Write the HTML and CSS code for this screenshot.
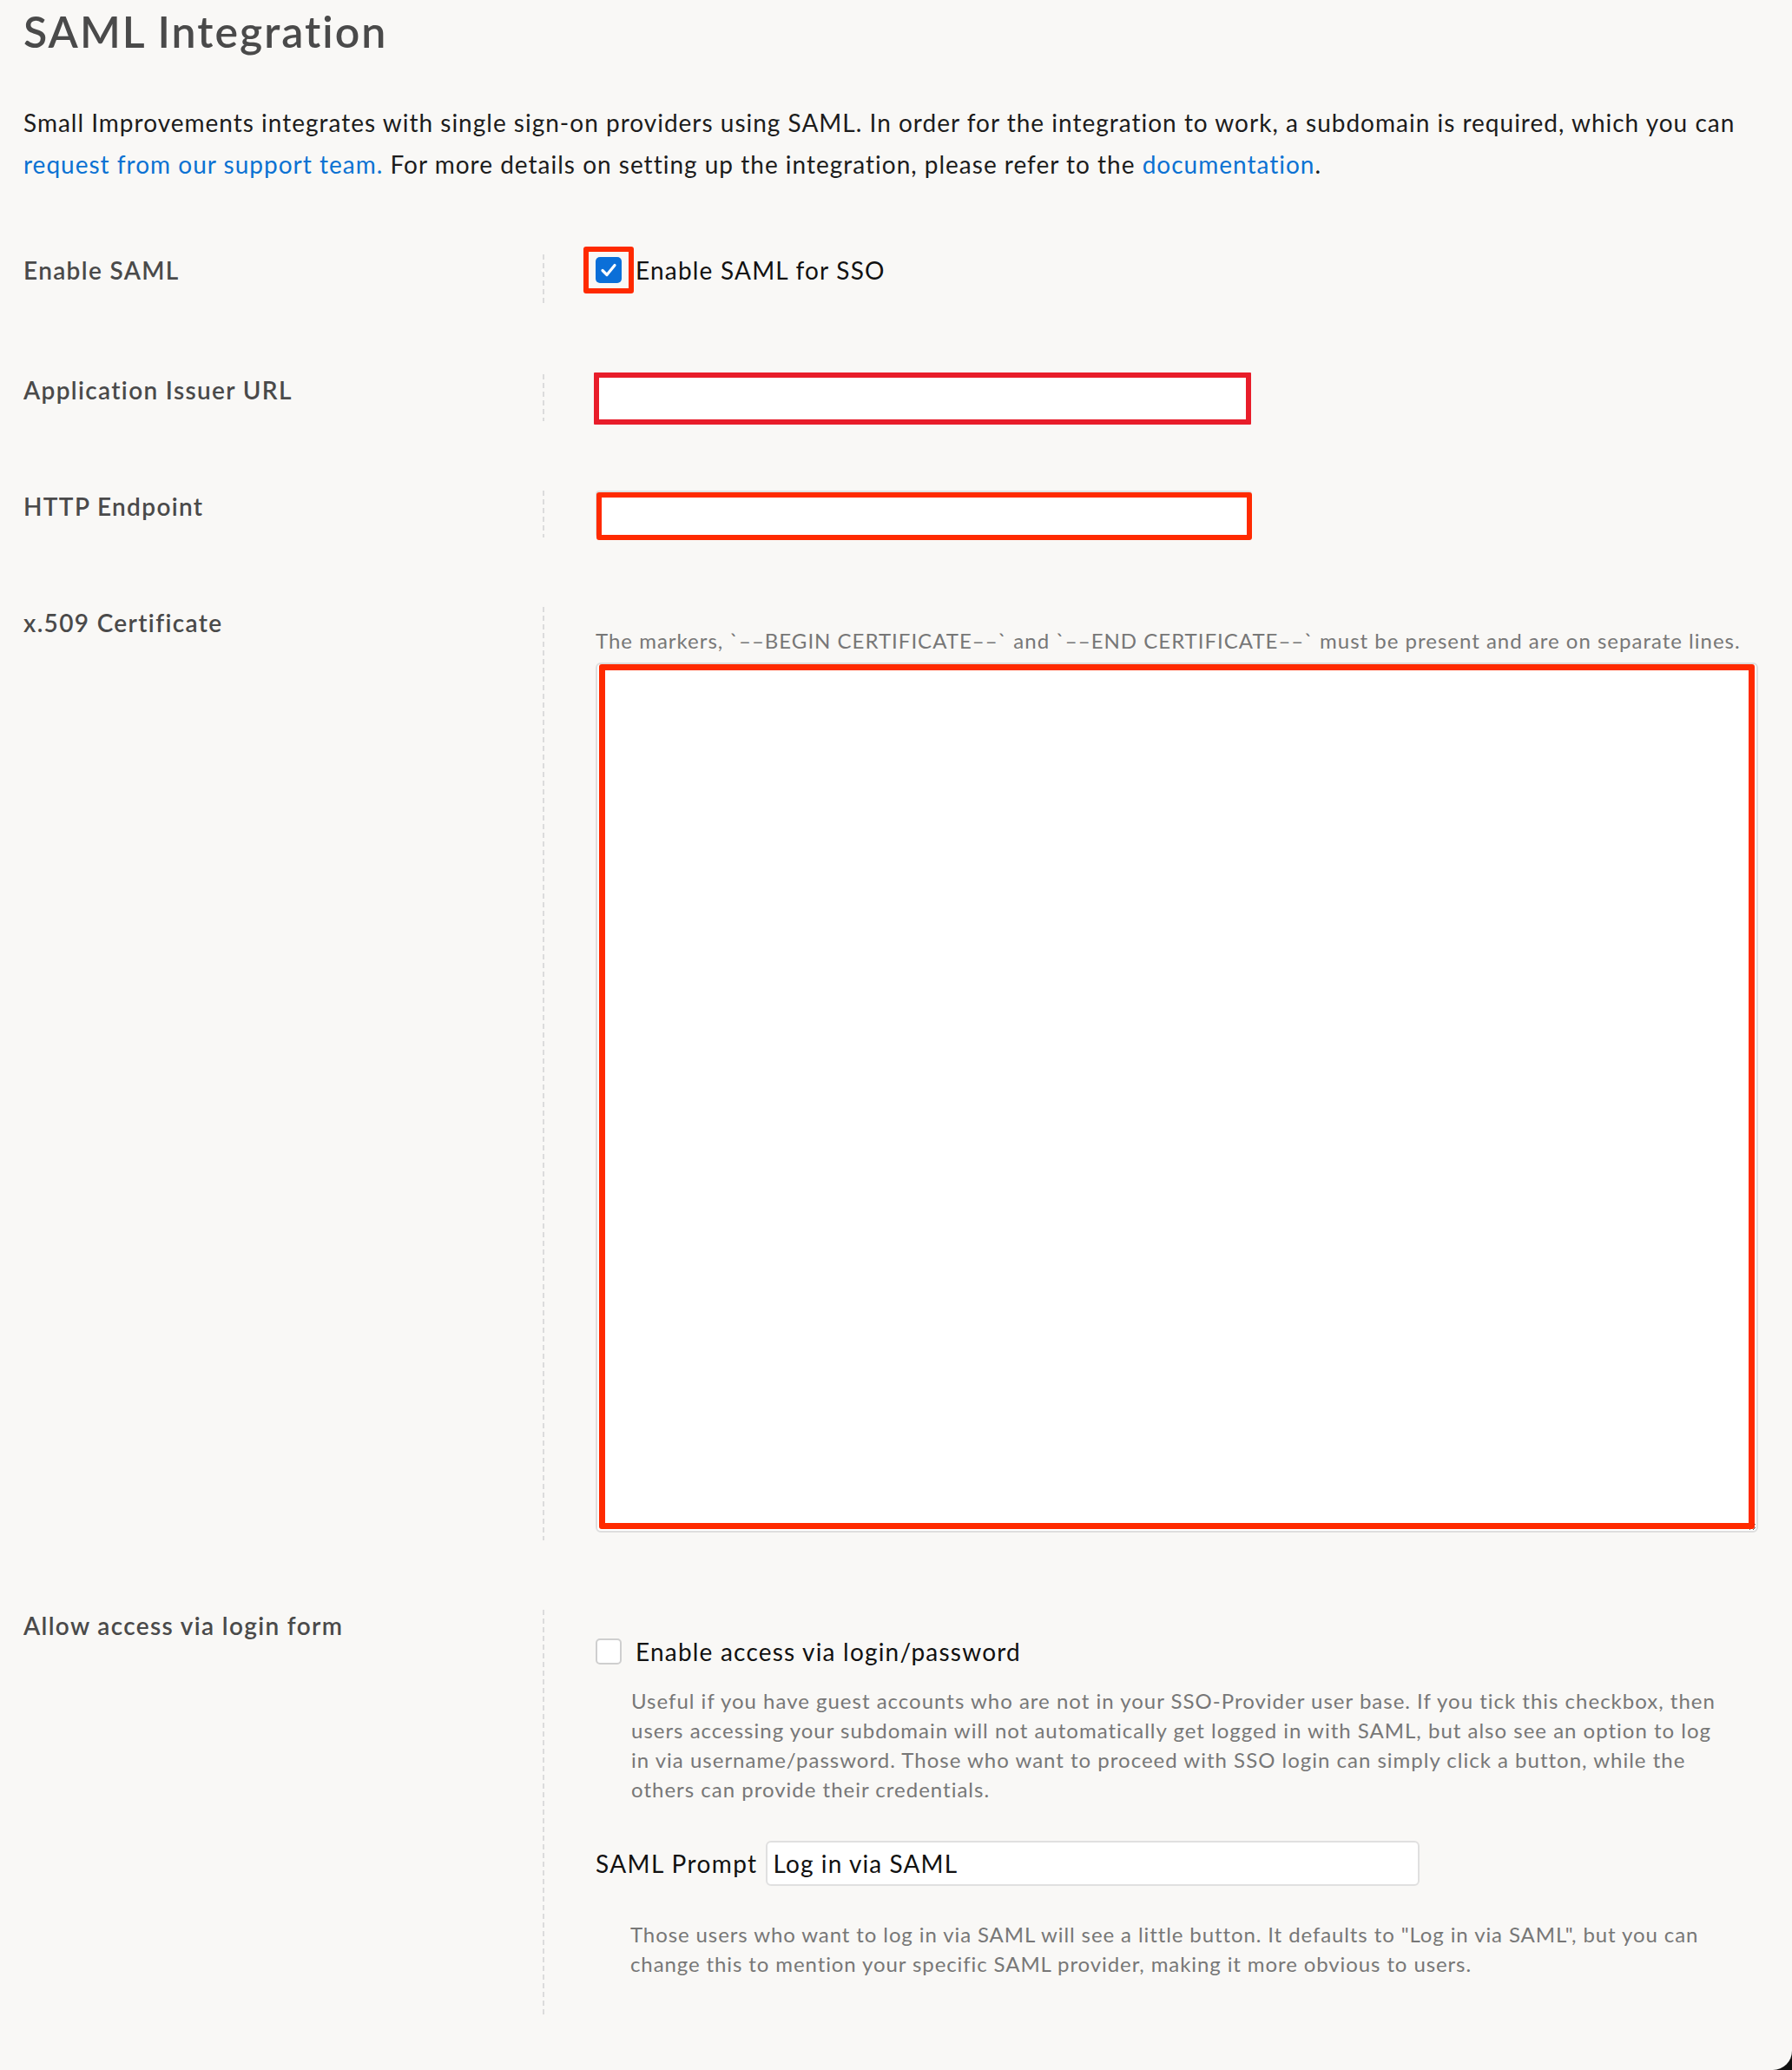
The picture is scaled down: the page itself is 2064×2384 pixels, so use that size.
FILE: index.html
```html
<!DOCTYPE html>
<html lang="en">
<head>
<meta charset="utf-8">
<title>SAML Integration</title>
<link rel="stylesheet" href="styles.css">
</head>
<body>
<main class="page">
  <h1 class="title">SAML Integration</h1>
  <p class="intro">Small Improvements integrates with single sign-on providers using SAML. In order for the integration to work, a subdomain is required, which you can <a href="#">request from our support team.</a> For more details on setting up the integration, please refer to the <a href="#">documentation</a>.</p>

  <section class="form">
    <div class="row">
      <div class="label">Enable SAML</div>
      <div class="field field-enable">
        <label class="check">
          <span class="box box-on annot annot-check">
            <svg viewBox="0 0 30 30" width="30" height="30" aria-hidden="true"><path d="M8 15.5 L13 20.5 L22 9.5" fill="none" stroke="#fff" stroke-width="3.2" stroke-linecap="round" stroke-linejoin="round"/></svg>
          </span>
          <span class="check-text">Enable SAML for SSO</span>
        </label>
      </div>
    </div>

    <div class="row">
      <div class="label">Application Issuer URL</div>
      <div class="field">
        <span class="annot annot-issuer"><input class="text-input" type="text"></span>
      </div>
    </div>

    <div class="row">
      <div class="label">HTTP Endpoint</div>
      <div class="field">
        <span class="annot annot-endpoint"><input class="text-input" type="text"></span>
      </div>
    </div>

    <div class="row">
      <div class="label">x.509 Certificate</div>
      <div class="field field-cert">
        <p class="hint">The markers, `––BEGIN CERTIFICATE––` and `––END CERTIFICATE––` must be present and are on separate lines.</p>
        <span class="annot annot-cert"><textarea class="cert"></textarea></span>
      </div>
    </div>

    <div class="row">
      <div class="label">Allow access via login form</div>
      <div class="field field-login">
        <label class="check">
          <span class="box box-off"></span>
          <span class="check-text">Enable access via login/password</span>
        </label>
        <p class="help">Useful if you have guest accounts who are not in your SSO-Provider user base. If you tick this checkbox, then users accessing your subdomain will not automatically get logged in with SAML, but also see an option to log in via username/password. Those who want to proceed with SSO login can simply click a button, while the others can provide their credentials.</p>
        <div class="prompt">
          <span class="prompt-label">SAML Prompt</span>
          <input class="prompt-input" type="text" value="Log in via SAML">
        </div>
        <p class="help help-prompt">Those users who want to log in via SAML will see a little button. It defaults to "Log in via SAML", but you can change this to mention your specific SAML provider, making it more obvious to users.</p>
      </div>
    </div>
  </section>
</main>
</body>
</html>
```

FILE: styles.css
```css
html {
  background: #111;
}
body {
  margin: 0;
}
.page {
  box-sizing: border-box;
  min-height: 100vh;
  background: #f9f8f6;
  border-bottom-right-radius: 22px;
  padding: 6px 39px 0 27px;
  font-family: "Lato", "Open Sans", sans-serif;
  letter-spacing: 1px;
  color: #1c1c1c;
}
.title {
  margin: 0 0 51px;
  font-size: 50px;
  line-height: 60px;
  font-weight: 600;
  letter-spacing: 2px;
  color: #4a4a4a;
}
.intro {
  margin: 0 0 80px;
  font-size: 28px;
  line-height: 48px;
  color: #1c1c1c;
}
.intro a {
  color: #0b72d3;
  text-decoration: none;
}
.row {
  display: grid;
  grid-template-columns: 598px 1fr;
  margin-bottom: 80px;
}
.label {
  font-size: 28px;
  line-height: 36px;
  font-weight: 600;
  letter-spacing: 1.35px;
  color: #4a4a4a;
}
.field {
  padding-left: 61px;
  background-image: repeating-linear-gradient(to bottom, #dcdcdc 0 6px, transparent 6px 10px);
  background-size: 2px 100%;
  background-repeat: no-repeat;
  background-position: left top;
}
.field-enable {
  padding-bottom: 22px;
}
.field-cert {
  padding-top: 22px;
  padding-bottom: 9px;
}
.field-login {
  padding-top: 30px;
  padding-bottom: 42px;
}
.check {
  display: flex;
  align-items: center;
  gap: 16px;
  height: 36px;
  font-size: 28px;
  line-height: 36px;
  letter-spacing: 1.2px;
  color: #111;
}
.box {
  box-sizing: border-box;
  display: block;
  width: 30px;
  height: 30px;
  border-radius: 5px;
  flex: none;
}
.box svg {
  display: block;
}
.box-on {
  background: #0b6fd8;
}
.box-off {
  background: #fff;
  border: 2px solid #cfcfcf;
}
.annot {
  position: relative;
  display: block;
}
.annot::after {
  content: "";
  position: absolute;
  border: 6px solid #ff2a00;
  border-radius: 3px;
  pointer-events: none;
}
.annot-check::after {
  inset: -12px -14px -12px -14px;
}
.annot-issuer {
  width: 754px;
}
.annot-issuer::after {
  inset: -2px -1px -4px -2px;
  border-color: #e81d2a;
  border-radius: 1px;
}
.annot-endpoint {
  width: 756px;
}
.annot-endpoint::after {
  inset: 2px 0 -3px 1px;
  border-width: 6px;
}
.annot-cert::after {
  inset: 2px 4px 4px 4px;
  border-width: 7px;
}
.text-input {
  box-sizing: border-box;
  display: block;
  width: 100%;
  height: 54px;
  margin: 0;
  border: 2px solid #e0e0e0;
  border-radius: 4px;
  background: #fff;
}
.hint {
  margin: 0 0 8px;
  font-size: 24px;
  line-height: 34px;
  color: #777;
  white-space: nowrap;
}
.cert {
  box-sizing: border-box;
  display: block;
  width: 1339px;
  height: 1002px;
  margin: 0;
  border: 2px solid #dedede;
  border-radius: 6px;
  background: #fff;
}
.help {
  margin: 22px 0 0;
  padding-left: 41px;
  width: 1262px;
  font-size: 24px;
  line-height: 34px;
  color: #777;
}
.prompt {
  display: flex;
  align-items: center;
  gap: 9px;
  margin-top: 42px;
  height: 52px;
}
.prompt-label {
  font-size: 28px;
  line-height: 36px;
  letter-spacing: 1.4px;
  color: #111;
}
.prompt-input {
  box-sizing: border-box;
  width: 753px;
  height: 52px;
  margin: 0;
  padding: 0 7px;
  border: 2px solid #e0e0e0;
  border-radius: 6px;
  background: #fff;
  font-family: "Lato", "Open Sans", sans-serif;
  font-size: 28px;
  letter-spacing: 1.1px;
  color: #111;
}
.help-prompt {
  margin-top: 39px;
  padding-left: 40px;
  letter-spacing: 0.9px;
}
```
